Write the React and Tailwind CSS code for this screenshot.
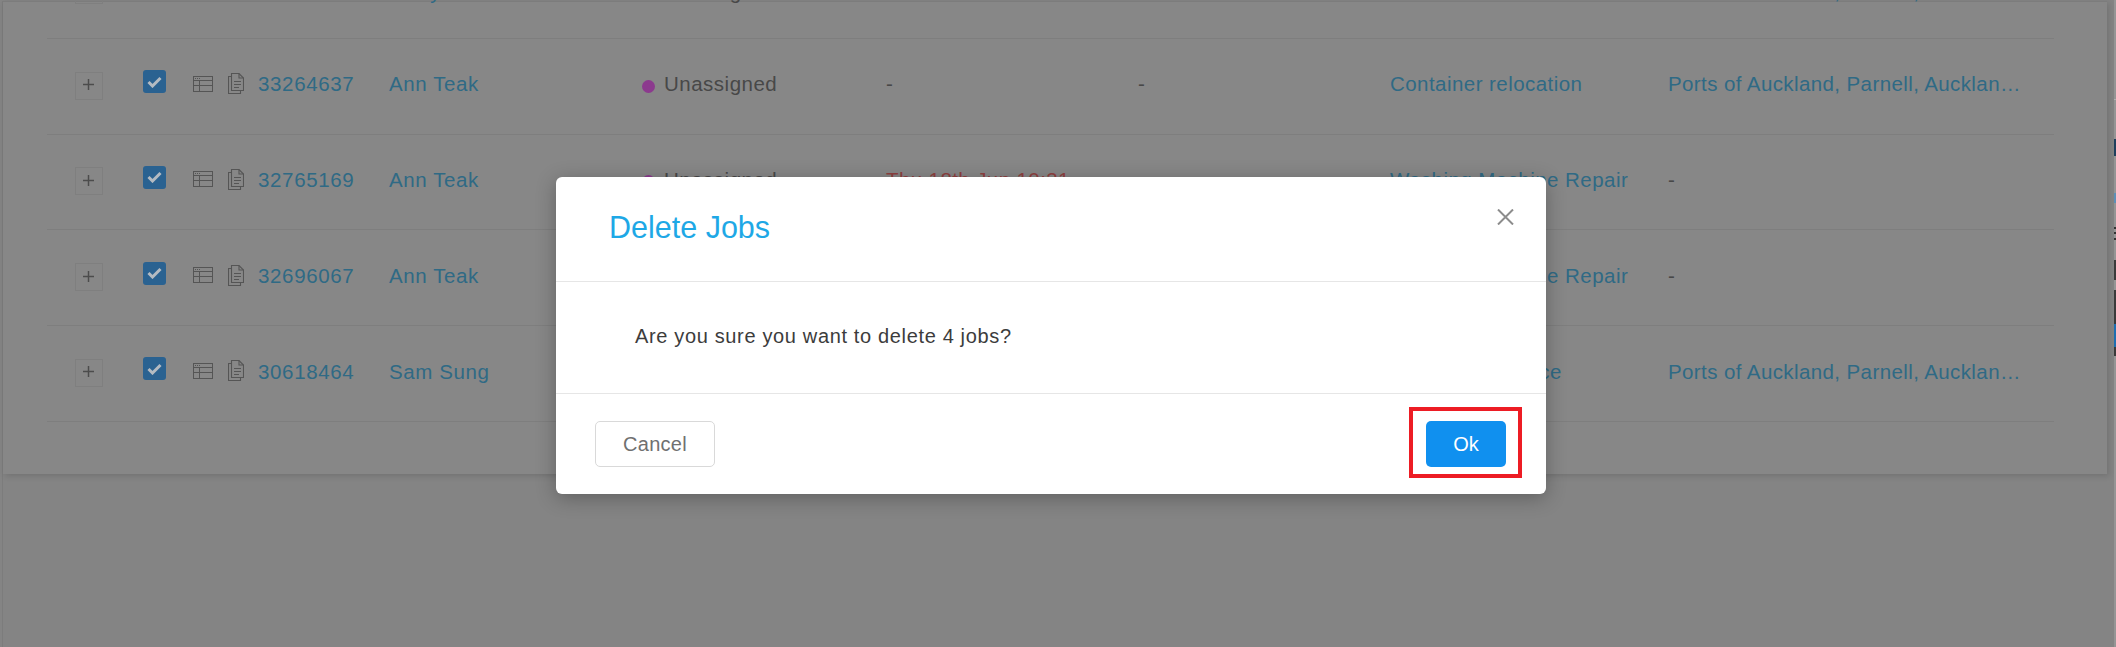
const FONT = "font-['Liberation_Sans',Arial,sans-serif]";

const rows = [
  { id: "33100482", name: "Kerry Lee", type: "Container relocation", addr: "Ports of Auckland, Parnell, Auckland, New Zealand", date: "-", shift: true },
  { id: "33264637", name: "Ann Teak", type: "Container relocation", addr: "Ports of Auckland, Parnell, Auckland, New Zealand", date: "-" },
  { id: "32765169", name: "Ann Teak", type: "Washing Machine Repair", addr: "-", date: "Thu 18th Jun 10:31", overdue: true },
  { id: "32696067", name: "Ann Teak", type: "Washing Machine Repair", addr: "-", date: "-" },
  { id: "30618464", name: "Sam Sung", type: "Appliance Service", addr: "Ports of Auckland, Parnell, Auckland, New Zealand", date: "-" },
];

function TableIcon() {
  return (
    <svg width="20" height="16" viewBox="0 0 20 16" fill="none" stroke="#555555" strokeWidth="1">
      <rect x="0.5" y="0.5" width="19" height="15" />
      <path d="M0.5 4.5H19.5M0.5 9.5H19.5M6.5 4.5V15.5" />
      <path d="M2 2.5H3M4 2.5H5M6 2.5H7" strokeWidth="1" />
    </svg>
  );
}

function DocIcon() {
  return (
    <svg width="16" height="21" viewBox="0 0 16 21" fill="none" stroke="#555555" strokeWidth="1.1">
      <path d="M5.5 0.5H11L15.5 5V17.5H3.5V0.5H5.5Z" />
      <path d="M11 0.5V5H15.5" />
      <path d="M3.5 3.5H0.5V20.5H12.5V17.5" />
      <path d="M6 8.5H13M6 11.5H13M6 14.5H11" />
    </svg>
  );
}

function CheckMark() {
  return (
    <svg width="15" height="12" viewBox="0 0 15 12" fill="none">
      <path d="M1.5 6L5.5 10L13.5 2" stroke="#b4bbc2" strokeWidth="3" />
    </svg>
  );
}

function Row({ r }) {
  const shift = r.shift ? "pt-[6px]" : "";
  return (
    <div className="flex h-[95.75px] items-center border-b border-[#7e7e7e] pl-[28px] text-[20.5px] leading-none">
      <div className="mb-[1px] flex h-[28px] w-[28px] shrink-0 items-center justify-center border border-[#7f7f7f] pb-[2px] pr-[1px]">
        <svg width="11" height="11" viewBox="0 0 12 12" stroke="#4c4c4c" strokeWidth="1.6">
          <path d="M0 6H12M6 0V12" />
        </svg>
      </div>
      <div className="mb-[9px] ml-[40px] flex h-[23px] w-[23px] shrink-0 items-center justify-center rounded-[3px] bg-[#2a6291]">
        <CheckMark />
      </div>
      <div className="mb-[5px] ml-[27px] flex w-[20px] shrink-0">
        <TableIcon />
      </div>
      <div className="mb-[5px] ml-[15px] flex w-[16px] shrink-0">
        <DocIcon />
      </div>
      <div className={`mb-[3px] ml-[14px] w-[131px] shrink-0 tracking-[0.65px] text-[#2f6a85] ${shift}`}>{r.id}</div>
      <div className={`mb-[3px] w-[253px] shrink-0 tracking-[0.6px] text-[#2f6a85] ${shift}`}>{r.name}</div>
      <div className={`mb-[3px] flex w-[244px] shrink-0 items-center tracking-[0.5px] text-[#484848] ${shift}`}>
        <span className="mr-[9px] mt-[3px] h-[13px] w-[13px] rounded-full bg-[#8c3a8e]" />
        Unassigned
      </div>
      <div className={`mb-[3px] w-[252px] shrink-0 tracking-[0.4px] ${r.overdue ? "text-[#8f4040]" : "text-[#484848]"} ${shift}`}>{r.date}</div>
      <div className={`mb-[3px] w-[252px] shrink-0 text-[#484848] ${shift}`}>-</div>
      <div className={`mb-[3px] w-[278px] shrink-0 tracking-[0.45px] text-[#2f6a85] ${shift}`}>{r.type}</div>
      <div className={`mb-[3px] w-[355px] shrink-0 truncate tracking-[0.4px] ${r.addr === "-" ? "text-[#484848]" : "text-[#2f6a85]"} ${shift}`}>{r.addr}</div>
    </div>
  );
}

function Modal() {
  return (
    <div className="absolute left-[556px] top-[177px] w-[990px] rounded-[6px] bg-white shadow-[0_4px_20px_rgba(0,0,0,0.28)]">
      <div className="flex h-[105px] items-center border-b border-[#e6e6e6] pl-[53px] text-[30.5px] leading-none text-[#1ea8e6]">
        <span className="mb-[4px]">Delete Jobs</span>
      </div>
      <button className="absolute left-[941px] top-[31px] flex h-[17px] w-[17px] items-center justify-center">
        <svg width="17" height="16" viewBox="0 0 17 16" stroke="#8c8c8c" strokeWidth="2" fill="none">
          <path d="M1 0.5L16 15.5M16 0.5L1 15.5" />
        </svg>
      </button>
      <div className="flex h-[112px] items-center border-b border-[#e6e6e6] pl-[79px] text-[20px] leading-none tracking-[0.65px] text-[#3c3c3c]">
        <span className="mb-[3px]">Are you sure you want to delete 4 jobs?</span>
      </div>
      <div className="flex h-[100px] items-center justify-between pl-[39px] pr-[40px]">
        <button className="h-[46px] w-[120px] rounded-[5px] border border-[#d9d9d9] bg-white text-[20px] tracking-[0.3px] text-[#707070]">Cancel</button>
        <button className="h-[46px] w-[80px] rounded-[5px] bg-[#1090ef] text-[20px] text-white">Ok</button>
      </div>
      <div className="absolute left-[853px] top-[230px] h-[71px] w-[113px] border-[4px] border-[#ed1c24]" />
    </div>
  );
}

export default function App() {
  return (
    <div className={`relative flex h-[647px] w-[2116px] overflow-hidden bg-[#848484] ${FONT}`}>
      <div className="w-[2114px] shrink-0">
        <div className="ml-[2px] h-full w-full border-l border-[#7c7c7c]">
          <div className="mt-[1px] h-[473px] w-[2104px] border-t border-[#7c7c7c] bg-[#878787] pl-[44px] shadow-[2px_2px_6px_rgba(0,0,0,0.14)]">
            <div className="-mt-[59px] w-[2007px]">
              {rows.map((r) => (
                <Row key={r.id} r={r} />
              ))}
            </div>
          </div>
        </div>
      </div>
      <div className="flex w-[2px] shrink-0 flex-col bg-[#959595]">
        <div className="h-[100px] shrink-0 border-b border-[#b0b0b0]" />
        <div className="h-[39px] shrink-0" />
        <div className="h-[17px] shrink-0 bg-[#1f3f5c]" />
        <div className="h-[37px] shrink-0" />
        <div className="h-[10px] shrink-0 bg-[#5f8fb5]" />
        <div className="h-[24px] shrink-0" />
        <div className="h-[2px] shrink-0 bg-[#333333]" />
        <div className="h-[3px] shrink-0" />
        <div className="h-[2px] shrink-0 bg-[#333333]" />
        <div className="h-[4px] shrink-0" />
        <div className="h-[2px] shrink-0 bg-[#333333]" />
        <div className="h-[20px] shrink-0" />
        <div className="h-[20px] shrink-0 bg-[#3a3a3a]" />
        <div className="h-[10px] shrink-0" />
        <div className="h-[34px] shrink-0 bg-[#3a3a3a]" />
        <div className="h-[23px] shrink-0 bg-[#1f6eb0]" />
        <div className="h-[9px] shrink-0 bg-[#3a3a3a]" />
      </div>
      <Modal />
    </div>
  );
}
